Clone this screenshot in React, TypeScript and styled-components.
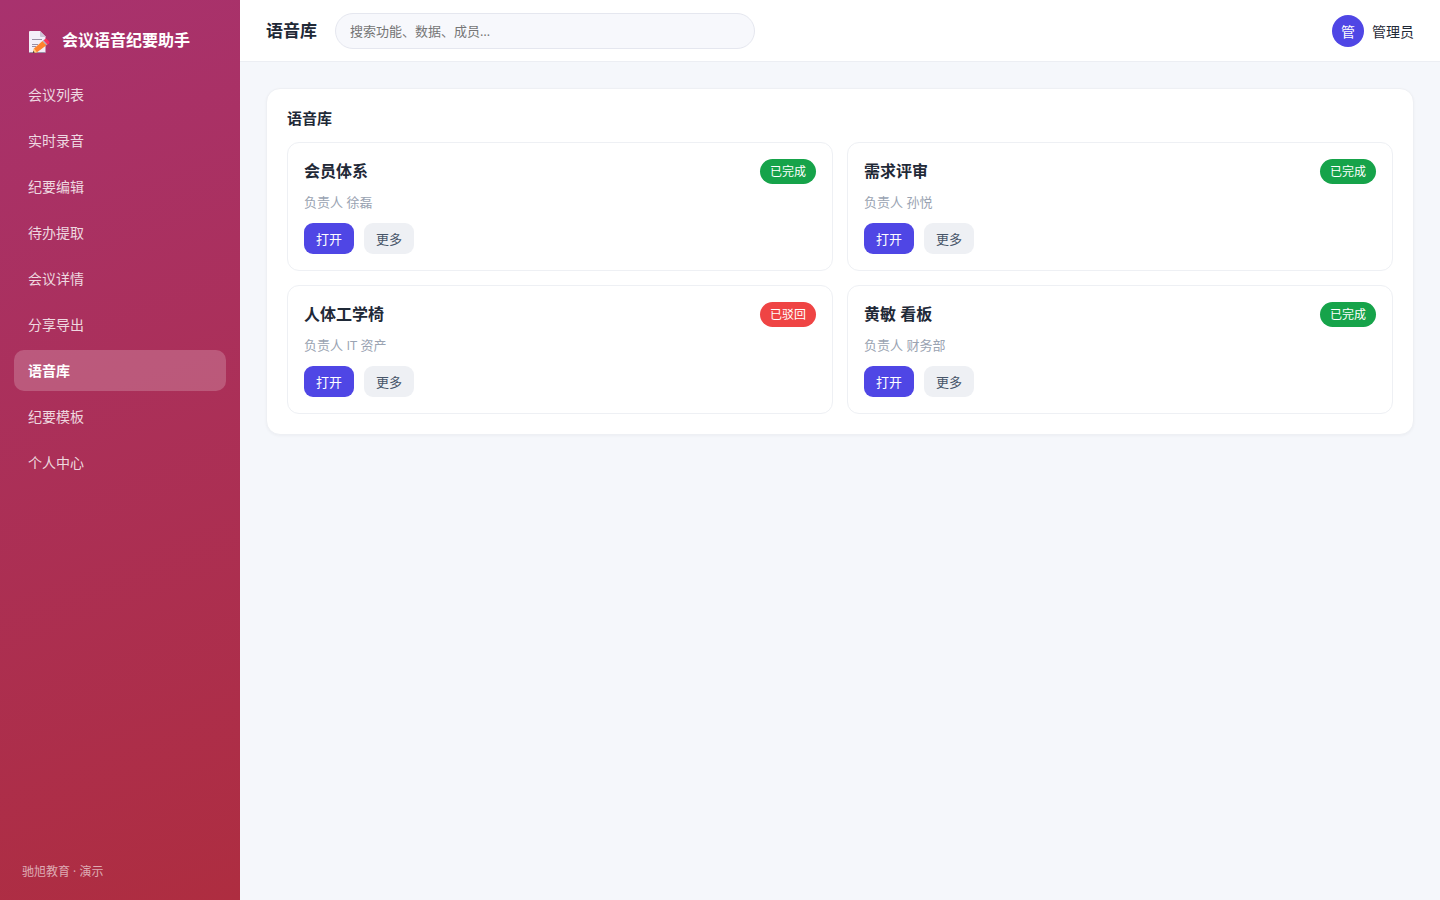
import React from "react";
import styled, { createGlobalStyle, css } from "styled-components";

const GlobalStyle = createGlobalStyle`
  * { box-sizing: border-box; }
  body {
    margin: 0;
    background: #f5f7fb;
    color: #1f2937;
    font-family: "Open Sans", "Noto Sans CJK SC", sans-serif;
    font-size: 14px;
  }
  button, input { font-family: inherit; }
`;

const Shell = styled.div`
  display: flex;
  min-height: 100vh;
`;

const Sidebar = styled.aside`
  flex: 0 0 240px;
  display: flex;
  flex-direction: column;
  padding: 22px 14px 18px;
  background: linear-gradient(160deg, #a8326e, #ae2d40);
  color: #fff;
`;

const Brand = styled.div`
  display: flex;
  align-items: center;
  gap: 12px;
  height: 34px;
  padding: 0 14px;
  margin-bottom: 18px;
  font-size: 16px;
  font-weight: 700;
  white-space: nowrap;
`;

const MemoSvg = styled.svg`
  width: 22px;
  height: 22px;
  margin-top: 6px;
  flex: none;
`;

const Nav = styled.nav`
  display: flex;
  flex-direction: column;
  gap: 5px;
`;

const NavLink = styled.a<{ $active: boolean }>`
  padding: 10px 14px;
  border-radius: 10px;
  line-height: 21px;
  color: rgba(255, 255, 255, 0.82);
  text-decoration: none;
  ${(p) =>
    p.$active &&
    css`
      background: rgba(255, 255, 255, 0.2);
      color: #fff;
      font-weight: 700;
    `}
`;

const SideFooter = styled.footer`
  margin-top: auto;
  padding: 0 8px;
  font-size: 12px;
  line-height: 20px;
  color: rgba(255, 255, 255, 0.6);
`;

const Main = styled.div`
  flex: 1;
  min-width: 0;
`;

const TopBar = styled.header`
  display: flex;
  align-items: center;
  gap: 18px;
  height: 62px;
  padding: 0 26px;
  background: #fff;
  border-bottom: 1px solid #eceef3;
`;

const PageTitle = styled.h1`
  margin: 0;
  font-size: 17px;
  line-height: 25px;
  font-weight: 700;
  white-space: nowrap;
`;

const Search = styled.input`
  flex: 0 1 420px;
  min-width: 0;
  height: 36px;
  padding: 0 14px;
  border: 1px solid #e5e7ef;
  border-radius: 18px;
  background: #f7f8fc;
  color: #1f2937;
  font-size: 13px;
  &::placeholder { color: #757575; opacity: 1; }
`;

const User = styled.div`
  display: flex;
  align-items: center;
  gap: 8px;
  margin-left: auto;
  white-space: nowrap;
`;

const Avatar = styled.span`
  display: grid;
  place-items: center;
  width: 32px;
  height: 32px;
  border-radius: 50%;
  background: #4f46e5;
  color: #fff;
`;

const Content = styled.main`
  padding: 26px;
`;

const Panel = styled.section`
  padding: 20px;
  background: #fff;
  border: 1px solid #eef0f4;
  border-radius: 14px;
  box-shadow: 0 1px 3px rgba(16, 24, 40, 0.04);
`;

const PanelTitle = styled.h2`
  margin: 0 0 15px;
  font-size: 15px;
  line-height: 18px;
  font-weight: 700;
`;

const CardGrid = styled.div`
  display: grid;
  grid-template-columns: 1fr 1fr;
  gap: 14px;
`;

const Card = styled.article`
  padding: 16px;
  border: 1px solid #eef0f4;
  border-radius: 12px;
`;

const CardHead = styled.div`
  display: flex;
  align-items: center;
  justify-content: space-between;
`;

const CardTitle = styled.h3`
  margin: 0;
  font-size: 16px;
  line-height: 25px;
  font-weight: 700;
`;

const Badge = styled.span<{ $rejected: boolean }>`
  padding: 0 10px;
  border-radius: 13px;
  background: ${(p) => (p.$rejected ? "#ef4444" : "#16a34a")};
  color: #fff;
  font-size: 12px;
  line-height: 25px;
`;

const Owner = styled.p`
  margin: 8px 0 11px;
  font-size: 13px;
  line-height: 20px;
  color: #9aa3b2;
`;

const Actions = styled.div`
  display: flex;
  gap: 10px;
`;

const Button = styled.button<{ $primary?: boolean }>`
  height: 31px;
  padding: 0 12px;
  border: 0;
  border-radius: 9px;
  background: ${(p) => (p.$primary ? "#4f46e5" : "#eef0f4")};
  color: ${(p) => (p.$primary ? "#fff" : "#475569")};
  font-size: 13px;
  cursor: pointer;
`;

const navItems = [
  "会议列表", "实时录音", "纪要编辑", "待办提取", "会议详情",
  "分享导出", "语音库", "纪要模板", "个人中心",
];

const records = [
  { title: "会员体系", owner: "徐磊", status: "已完成" },
  { title: "需求评审", owner: "孙悦", status: "已完成" },
  { title: "人体工学椅", owner: "IT 资产", status: "已驳回" },
  { title: "黄敏 看板", owner: "财务部", status: "已完成" },
];

function MemoIcon() {
  return (
    <MemoSvg viewBox="0 0 22 22" aria-hidden="true">
      <path d="M2 0h10l5.500 5.500V21a1 1 0 0 1-1 1H2a1 1 0 0 1-1-1V1a1 1 0 0 1 1-1z" fill="#f3eef8" />
      <path d="M12 0l5.500 5.500V6H13a1 1 0 0 1-1-1z" fill="#cdc4d6" />
      <path d="M1 21h16.500a1 1 0 0 1-1 1H2a1 1 0 0 1-1-1z" fill="#998ea4" />
      <path d="M4 8.500h10M4 13.500h6M4 15.500h4" stroke="#998ea4" strokeWidth="1" />
      <path d="M14.500 10l4 4.200-9.500 7-4.200.8 1.200-4.500z" fill="#ff822d" />
      <path d="M6 17.500l3 3.700-4.200.8z" fill="#ffce7c" />
      <path d="M5.300 20l1.500 1.600-2 .4z" fill="#33233a" />
      <path d="M14.500 10l1.500-1.200 3.800 4.200-1.300 1.200z" fill="#b4acbc" />
      <path d="M15.600 9.200l1.500-1.300a1.200 1.200 0 0 1 1.600.1l2.400 2.600a1.200 1.200 0 0 1 0 1.600l-1.600 1.300z" fill="#f8315f" />
    </MemoSvg>
  );
}

export default function App() {
  return (
    <>
      <GlobalStyle />
      <Shell>
        <Sidebar>
          <Brand>
            <MemoIcon />
            <span>会议语音纪要助手</span>
          </Brand>
          <Nav>
            {navItems.map((item) => (
              <NavLink
                key={item}
                href="#"
                $active={item === "语音库"}
                aria-current={item === "语音库" ? "page" : undefined}
              >
                {item}
              </NavLink>
            ))}
          </Nav>
          <SideFooter>驰旭教育 · 演示</SideFooter>
        </Sidebar>
        <Main>
          <TopBar>
            <PageTitle>语音库</PageTitle>
            <Search type="search" aria-label="搜索" placeholder="搜索功能、数据、成员…" />
            <User>
              <Avatar>管</Avatar>
              <span>管理员</span>
            </User>
          </TopBar>
          <Content>
            <Panel>
              <PanelTitle>语音库</PanelTitle>
              <CardGrid>
                {records.map((r) => (
                  <Card key={r.title}>
                    <CardHead>
                      <CardTitle>{r.title}</CardTitle>
                      <Badge $rejected={r.status === "已驳回"}>{r.status}</Badge>
                    </CardHead>
                    <Owner>负责人 {r.owner}</Owner>
                    <Actions>
                      <Button type="button" $primary>打开</Button>
                      <Button type="button">更多</Button>
                    </Actions>
                  </Card>
                ))}
              </CardGrid>
            </Panel>
          </Content>
        </Main>
      </Shell>
    </>
  );
}
